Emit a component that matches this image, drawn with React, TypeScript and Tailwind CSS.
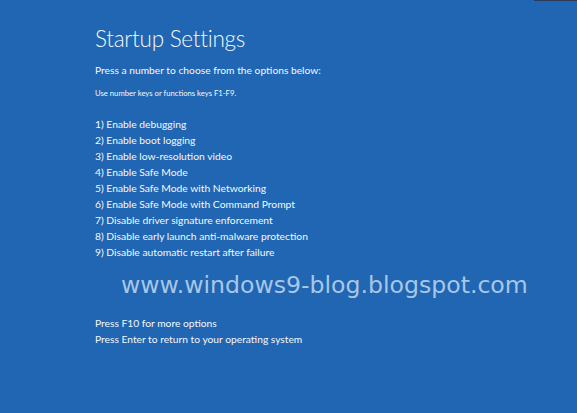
import React from "react";

const items = [
  "1) Enable debugging",
  "2) Enable boot logging",
  "3) Enable low-resolution video",
  "4) Enable Safe Mode",
  "5) Enable Safe Mode with Networking",
  "6) Enable Safe Mode with Command Prompt",
  "7) Disable driver signature enforcement",
  "8) Disable early launch anti-malware protection",
  "9) Disable automatic restart after failure",
];

export default function App() {
  return (
    <div
      className="relative w-[577px] h-[413px] overflow-hidden bg-[#2066b2] text-[#f4f8fc]"
      style={{ fontFamily: 'Lato, "Open Sans", sans-serif' }}
    >
      <div className="absolute right-0 top-0 h-[1px] w-[43px] bg-[#2a3a5a]" />
      <div className="flex flex-col pl-[95px] pt-[23px]">
        <h1 className="text-[22.5px] leading-[32px] font-light tracking-[-0.25px]">Startup Settings</h1>
        <p className="mt-[7px] text-[10.25px] leading-[16px]">Press a number to choose from the options below:</p>
        <p className="mt-[9px] text-[7.7px] leading-[12px]">Use number keys or functions keys F1-F9.</p>
        <ul className="mt-[16.5px] flex flex-col text-[10.3px] leading-[16px]">
          {items.map((t) => (
            <li key={t}>{t}</li>
          ))}
        </ul>
        <div
          className="mt-[9px] -ml-[95px] pl-[121px] text-[23.6px] leading-[32px] text-[#a9c6e8]"
          style={{ fontFamily: '"DejaVu Sans", Verdana, sans-serif' }}
        >
          www.windows9-blog.blogspot.com
        </div>
        <p className="mt-[14px] text-[10.25px] leading-[16.5px]">Press F10 for more options</p>
        <p className="text-[10.25px] leading-[16.5px]">Press Enter to return to your operating system</p>
      </div>
    </div>
  );
}
